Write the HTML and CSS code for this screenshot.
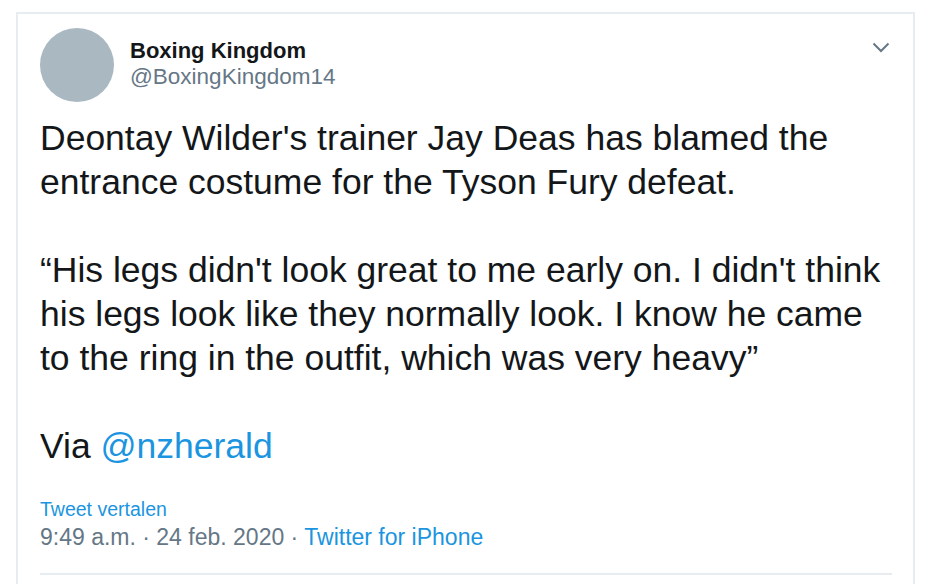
FILE: index.html
```html
<!DOCTYPE html>
<html lang="en">
<head>
  <meta charset="UTF-8">
  <title>Boxing Kingdom on Twitter</title>
  <link rel="stylesheet" href="styles.css">
</head>
<body>
  <div class="tweet">
    <div class="tweet-header">
      <div class="avatar"></div>
      <div class="user">
        <div class="name">Boxing Kingdom</div>
        <div class="handle">@BoxingKingdom14</div>
      </div>
      <svg class="caret" width="18" height="11" viewBox="0 0 18 11">
        <path d="M1.5 1.5 L9 9 L16.5 1.5" fill="none" stroke="#657786" stroke-width="2"/>
      </svg>
    </div>

    <div class="tweet-text">
      <p>Deontay Wilder's trainer Jay Deas has blamed the entrance costume for the Tyson Fury defeat.</p>
      <p>“His legs didn't look great to me early on. I didn't think his legs look like they normally look. I know he came to the ring in the outfit, which was very heavy”</p>
      <p>Via <a href="#">@nzherald</a></p>
    </div>

    <a class="translate" href="#">Tweet vertalen</a>
    <div class="meta">9:49 a.m. · 24 feb. 2020 · <a href="#">Twitter for iPhone</a></div>
    <div class="divider"></div>
  </div>
</body>
</html>
```

FILE: styles.css
```css
body {
  margin: 0;
  background: #fff;
  font-family: 'Liberation Sans', Arial, sans-serif;
  color: #14171a;
}
a {
  color: #1b95e0;
  text-decoration: none;
}
.tweet {
  margin: 12px 0 0 16px;
  width: 899px;
  height: 600px;
  border: 2px solid #e6ecf0;
  border-bottom: none;
  padding: 14px 0 0 22px;
  box-sizing: border-box;
}
.tweet-header {
  display: flex;
  align-items: flex-start;
}
.avatar {
  width: 74px;
  height: 74px;
  border-radius: 50%;
  background: #aab8c2;
  flex-shrink: 0;
}
.user {
  margin-left: 16px;
  padding-top: 10px;
  flex: 1;
}
.name {
  font-weight: bold;
  font-size: 22px;
  line-height: 26px;
}
.handle {
  font-size: 22.5px;
  line-height: 26px;
  color: #657786;
}
.caret {
  margin: 14px 23px 0 0;
}
.tweet-text {
  margin-top: 14px;
  font-size: 35.5px;
  line-height: 44px;
  padding-right: 23px;
}
.tweet-text p {
  margin: 0 0 44px;
}
.tweet-text p:last-child {
  margin-bottom: 0;
}
.translate {
  display: block;
  margin-top: 30px;
  font-size: 19.5px;
  line-height: 22px;
}
.meta {
  margin-top: 3px;
  font-size: 23px;
  line-height: 28px;
  color: #657786;
}
.divider {
  margin-top: 22px;
  width: 852px;
  height: 2px;
  background: #e6ecf0;
}
```
